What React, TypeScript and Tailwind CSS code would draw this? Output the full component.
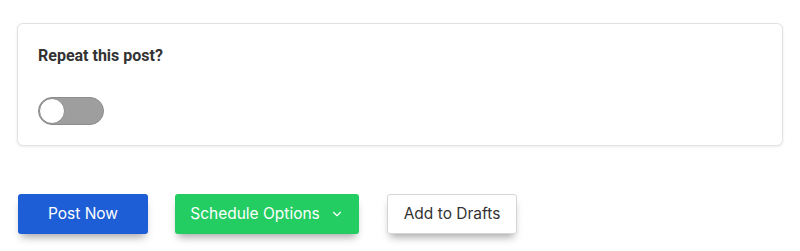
import { ChevronDown } from 'lucide-react'

const App = () => {
  return (
    <div className="min-h-screen bg-white px-[17px] pt-[23px] font-['Inter',sans-serif]">
      {/* Repeat card */}
      <div className="rounded-md border border-[#e2e2e2] bg-white px-5 pt-[22px] pb-5 shadow-[0_1px_3px_rgba(0,0,0,0.08)]">
        <h3 className="font-['Roboto',sans-serif] text-[16px] font-bold leading-5 text-[#333]">Repeat this post?</h3>
        <button className="mt-[31px] flex h-[28px] w-[66px] items-center rounded-full border border-[#8c8c8c] bg-[#9e9e9e]">
          <span className="block h-[26px] w-[26px] rounded-full border border-[#8c8c8c] bg-white" />
        </button>
      </div>

      {/* Actions */}
      <div className="mt-12 flex items-center gap-[27px] pl-[1px]">
        <button className="h-10 w-[130px] rounded-[3px] bg-[#1d5ed6] text-[15.5px] text-white shadow-[0_6px_8px_-3px_rgba(0,0,0,0.35)]">
          Post Now
        </button>
        <button className="flex h-10 w-[184px] items-center justify-center gap-[10px] rounded-[3px] bg-[#23cd61] text-[15.5px] text-white shadow-[0_6px_8px_-3px_rgba(0,0,0,0.35)]">
          Schedule Options
          <ChevronDown className="h-[14px] w-[14px]" strokeWidth={2} />
        </button>
        <button className="ml-[1px] h-10 w-[130px] rounded-[3px] border border-[#d6d6d6] bg-white text-[15.5px] text-[#333] shadow-[0_6px_8px_-3px_rgba(0,0,0,0.35)]">
          Add to Drafts
        </button>
      </div>
    </div>
  )
}

export default App
